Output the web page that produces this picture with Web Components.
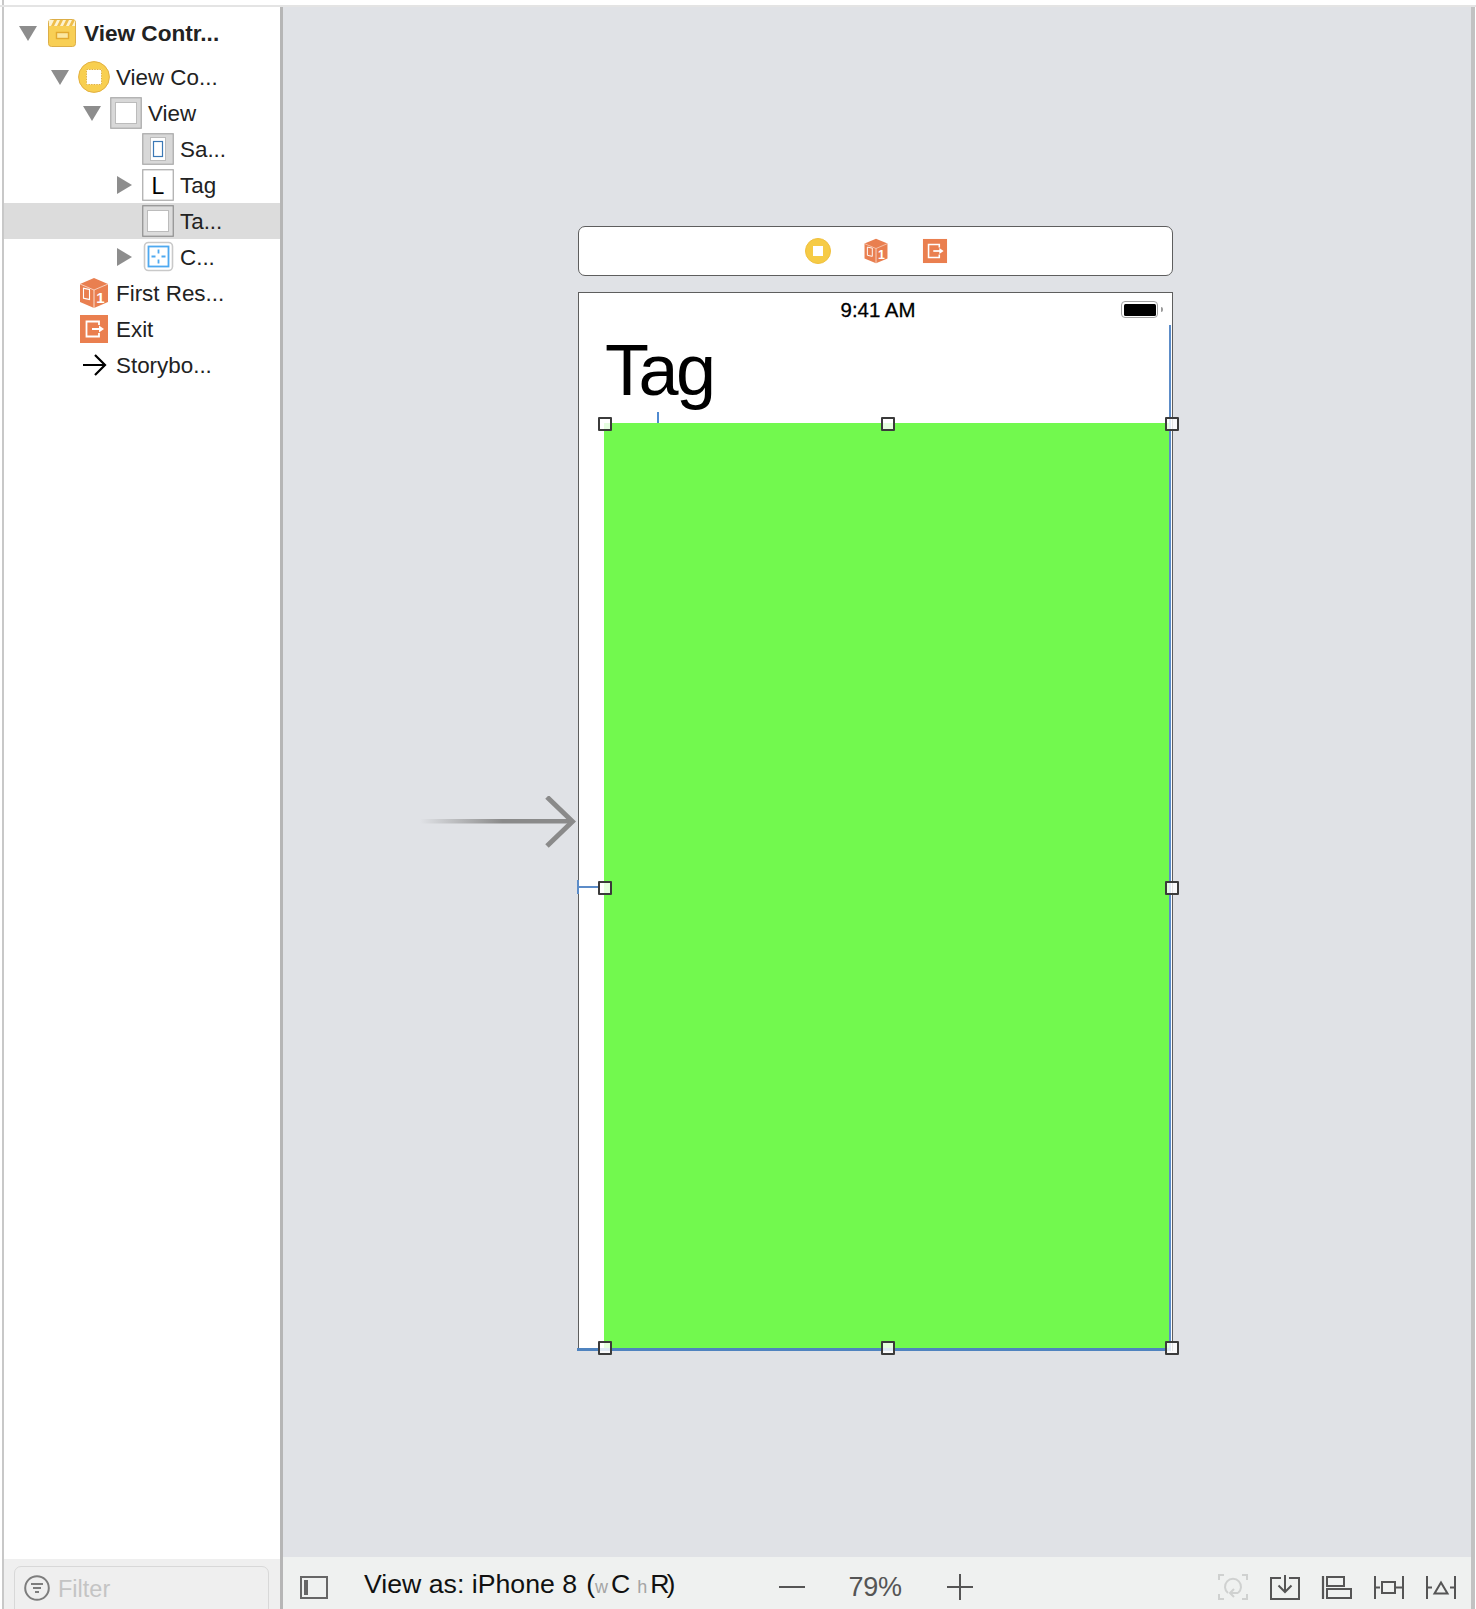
<!DOCTYPE html>
<html>
<head>
<meta charset="utf-8">
<title>Storyboard</title>
<style>
  html, body { margin: 0; padding: 0; background: #fff; }
  body { font-family: "Liberation Sans", Arial, sans-serif; }
</style>
</head>
<body>
<xc-app>
  <xc-outline slot="outline">
    <xc-row level="0" arrow="down" bold><xc-icon name="scene"></xc-icon>View Contr...</xc-row>
    <xc-row level="1" arrow="down"><xc-icon name="controller"></xc-icon>View Co...</xc-row>
    <xc-row level="2" arrow="down"><xc-icon name="view"></xc-icon>View</xc-row>
    <xc-row level="3"><xc-icon name="safe"></xc-icon>Sa...</xc-row>
    <xc-row level="3" arrow="right"><xc-icon name="label"></xc-icon>Tag</xc-row>
    <xc-row level="3" selected><xc-icon name="selected"></xc-icon>Ta...</xc-row>
    <xc-row level="3" arrow="right"><xc-icon name="constraints"></xc-icon>C...</xc-row>
    <xc-row level="1"><xc-icon name="cube"></xc-icon>First Res...</xc-row>
    <xc-row level="1"><xc-icon name="exit"></xc-icon>Exit</xc-row>
    <xc-row level="1"><xc-icon name="arrow"></xc-icon>Storybo...</xc-row>
  </xc-outline>
  <xc-filter slot="filter">Filter</xc-filter>
  <xc-canvas slot="canvas"></xc-canvas>
  <xc-bar slot="bar"></xc-bar>
</xc-app>

<script>
// tous les pictos de l'interface, dessines en svg
const ICONS = {
  scene: `<svg width="28" height="28" viewBox="0 0 28 28">
      <rect x=".5" y=".5" width="27" height="27" rx="3" fill="#f8cf55" stroke="#dcae48"/>
      <path d="M1 1h26v6H1z" fill="#fdf3d0"/>
      <path d="M3 7l3-6h3L6 7zM9 7l3-6h3l-3 6zM15 7l3-6h3l-3 6zM21 7l3-6h3l-3 6z" fill="#eebd4a"/>
      <rect x="8.5" y="13.5" width="12" height="6" fill="#fbe7a2" stroke="#e2a92f" stroke-width="1.4"/></svg>`,
  controller: `<svg width="32" height="32" viewBox="0 0 32 32">
      <circle cx="16" cy="16" r="15.4" fill="#f8cf50" stroke="#e3b141"/>
      <rect x="8.5" y="8.5" width="15" height="15" fill="#fff" stroke="#e0b040" stroke-dasharray="1.4 1.2"/></svg>`,
  view: `<svg width="32" height="32" viewBox="0 0 32 32">
      <rect x=".75" y=".75" width="30.5" height="30.5" fill="#d8d8d8" stroke="#a9a9a9" stroke-width="1.2"/>
      <rect x="5.5" y="5.5" width="21" height="21" fill="#fff" stroke="#bcbcbc"/></svg>`,
  safe: `<svg width="32" height="32" viewBox="0 0 32 32">
      <rect x=".75" y=".75" width="30.5" height="30.5" fill="#d8d8d8" stroke="#a9a9a9" stroke-width="1.2"/>
      <rect x="8.5" y="4.5" width="15" height="23" fill="#fff" stroke="#bcbcbc"/>
      <rect x="11.5" y="8.5" width="9" height="15" fill="#fff" stroke="#3b78b5" stroke-width="1.2"/></svg>`,
  label: `<svg width="32" height="32" viewBox="0 0 32 32">
      <rect x=".75" y=".75" width="30.5" height="30.5" fill="#fff" stroke="#a9a9a9" stroke-width="1.2"/>
      <text x="16" y="24.5" text-anchor="middle" font-family="Liberation Sans" font-size="23" fill="#000">L</text></svg>`,
  selected: `<svg width="32" height="32" viewBox="0 0 32 32">
      <rect x=".75" y=".75" width="30.5" height="30.5" fill="#dcdcdc" stroke="#8f8f8f" stroke-width="1.2"/>
      <rect x="5.5" y="5.5" width="21" height="21" fill="#fff" stroke="#bcbcbc"/></svg>`,
  constraints: `<svg width="32" height="32" viewBox="0 0 32 32">
      <rect x="2.5" y="1.5" width="28" height="28" rx="4" fill="#fff" stroke="#c9c9c9" stroke-width="1.6"/>
      <rect x="6.5" y="5.5" width="20" height="20" fill="#fff" stroke="#4ea9f0" stroke-width="1.8"/>
      <path d="M16.5 8.5v4M16.5 18.5v4M9.5 15.5h4M19.5 15.5h4" stroke="#4ea9f0" stroke-width="1.8"/></svg>`,
  cube: `<svg width="28" height="30" viewBox="0 0 28 30">
      <path d="M14 0l14 6v18l-14 6-14-6V6z" fill="#e97f50"/>
      <path d="M0 6l14 6 14-6" fill="none" stroke="#fbe0d2" stroke-width=".8"/>
      <path d="M14 12v18" stroke="#fbe0d2" stroke-width="1"/>
      <rect x="3.5" y="10.5" width="6" height="10" fill="none" stroke="#fff" stroke-width="1.1" transform="skewY(12) translate(0 -1)"/>
      <text x="20.5" y="25" text-anchor="middle" font-family="Liberation Sans" font-weight="bold" font-size="15" fill="#fff">1</text></svg>`,
  exit: `<svg width="28" height="28" viewBox="0 0 28 28">
      <rect width="28" height="28" fill="#ea7f4f"/>
      <path d="M19 10V6.5H6.5v15H19V18" fill="none" stroke="#fff" stroke-width="1.8"/>
      <path d="M12 14h8" stroke="#fff" stroke-width="2"/>
      <path d="M19 10.5l5 3.5-5 3.5z" fill="#fff"/></svg>`,
  arrow: `<svg width="32" height="28" viewBox="0 0 32 28">
      <path d="M5 14h22M17 4l10 10-10 10" fill="none" stroke="#000" stroke-width="2.2"/></svg>`,
  dockController: `<svg width="26" height="26" viewBox="0 0 26 26">
      <circle cx="13" cy="13" r="12.5" fill="#f6cb45" stroke="#f0c03c"/>
      <rect x="8" y="8" width="10" height="10" fill="#fff"/></svg>`,
  panel: `<svg width="28" height="23" viewBox="0 0 28 23">
      <rect x="1" y="1" width="26" height="21" fill="none" stroke="#666" stroke-width="2"/>
      <rect x="4" y="4" width="4" height="15" fill="#666"/></svg>`,
  rotate: `<svg width="30" height="26" viewBox="0 0 30 26">
      <path d="M1 6V1h5M24 1h5v5M29 20v5h-5M6 25H1v-5" fill="none" stroke="#cfd1d0" stroke-width="2"/>
      <path d="M10 19a8 8 0 1 1 10 0M20 19h-7M16 15l-4 4 4 4" fill="none" stroke="#cfd1d0" stroke-width="2"/></svg>`,
  embed: `<svg width="30" height="25" viewBox="0 0 30 25">
      <path d="M11 3H1v21h28V3H19" fill="none" stroke="#555" stroke-width="2"/>
      <path d="M15 0v16M8.5 10.5l6.5 6.5 6.5-6.5" fill="none" stroke="#555" stroke-width="2"/></svg>`,
  align: `<svg width="30" height="23" viewBox="0 0 30 23">
      <path d="M1 0v23" stroke="#555" stroke-width="2.2"/>
      <rect x="5" y="1" width="17" height="9" fill="none" stroke="#555" stroke-width="2"/>
      <rect x="5" y="13" width="24" height="9" fill="none" stroke="#555" stroke-width="2"/></svg>`,
  pin: `<svg width="30" height="23" viewBox="0 0 30 23">
      <path d="M1 0v23M29 0v23M1 11.5h5M22 11.5h7" stroke="#555" stroke-width="2"/>
      <rect x="8" y="6" width="13" height="11" fill="none" stroke="#555" stroke-width="2"/></svg>`,
  stack: `<svg width="30" height="23" viewBox="0 0 30 23">
      <path d="M1 0v23M29 0v23M1 11.5h5M24 11.5h5" stroke="#555" stroke-width="2"/>
      <path d="M15 6.5l6.5 11h-13z" fill="none" stroke="#555" stroke-width="2"/></svg>`
};

// un picto par son nom
class XcIcon extends HTMLElement {
  constructor() {
    super();
    this.shadowroot = this.attachShadow({ mode: 'open' });
  }
  connectedCallback() {
    let name = this.getAttribute('name');
    this.shadowroot.innerHTML = `
      <style>
        :host { display: inline-flex; align-items: center; justify-content: center; }
        svg { display: block; overflow: visible; }
      </style>
      ${ICONS[name]}`;
  }
}
customElements.define('xc-icon', XcIcon);

// une ligne de l'arbre : niveau, triangle, icone puis texte
class XcRow extends HTMLElement {
  constructor() {
    super();
    this.shadowroot = this.attachShadow({ mode: 'open' });
  }
  connectedCallback() {
    let level = Number(this.getAttribute('level')) || 0;
    let arrow = this.getAttribute('arrow');
    this.shadowroot.innerHTML = `
      <style>
        :host {
          display: flex; align-items: center; height: 36px; box-sizing: border-box;
          padding-left: ${15 + level * 32}px;
          font: 22.4px "Liberation Sans", Arial, sans-serif; color: #222;
        }
        :host([bold]) { font-weight: bold; font-size: 22.6px; margin-bottom: 8px; }
        :host([selected]) { background: #dcdcdc; }
        .arrow { width: 27px; flex: none; display: flex; }
        .down { border-top: 15px solid #8d8d8d; border-left: 9px solid transparent; border-right: 9px solid transparent; }
        .right { margin-left: 2px; border-left: 15px solid #8d8d8d; border-top: 9px solid transparent; border-bottom: 9px solid transparent; }
        .icon { width: 32px; flex: none; display: flex; justify-content: center; margin-right: 6px; }
        .text { margin-top: 1px; white-space: nowrap; }
      </style>
      <span class="arrow"><span class="${arrow || ''}"></span></span>
      <span class="icon"><slot name="icon"></slot></span>
      <span class="text"><slot></slot></span>`;
    let icon = this.querySelector('xc-icon');
    if (icon) icon.slot = 'icon';
  }
}
customElements.define('xc-row', XcRow);

class XcOutline extends HTMLElement {
  constructor() {
    super();
    this.shadowroot = this.attachShadow({ mode: 'open' });
  }
  connectedCallback() {
    this.shadowroot.innerHTML = `
      <style>
        :host { display: block; padding-top: 8px; }
      </style>
      <slot></slot>`;
  }
}
customElements.define('xc-outline', XcOutline);

// champ filtre en bas de la colonne
class XcFilter extends HTMLElement {
  constructor() {
    super();
    this.shadowroot = this.attachShadow({ mode: 'open' });
  }
  connectedCallback() {
    this.shadowroot.innerHTML = `
      <style>
        :host { display: block; height: 50px; box-sizing: border-box; background: #efefef; padding: 7px 11px 0 10px; overflow: hidden; }
        .field {
          height: 60px; box-sizing: border-box; border: 1.5px solid #d8d8d8; border-radius: 7px;
          display: flex; align-items: flex-start; padding: 8px 0 0 9px; gap: 8px;
          font: 23.5px "Liberation Sans", Arial, sans-serif; color: #c4c4c4;
        }
        svg { display: block; flex: none; }
        span { line-height: 26px; margin-top: 1px; }
      </style>
      <div class="field">
        <svg width="26" height="26" viewBox="0 0 26 26">
          <circle cx="13" cy="13" r="11.8" fill="none" stroke="#7d7d7d" stroke-width="2"/>
          <path d="M7 9h12M9 13h8M11 17h4" stroke="#7d7d7d" stroke-width="1.8"/>
        </svg>
        <span><slot></slot></span>
      </div>`;
  }
}
customElements.define('xc-filter', XcFilter);

// poignee de selection, posee sur la vue verte
class XcHandle extends HTMLElement {
  constructor() {
    super();
    this.shadowroot = this.attachShadow({ mode: 'open' });
  }
  connectedCallback() {
    this.shadowroot.innerHTML = `
      <style>
        :host {
          position: absolute; width: 14px; height: 14px; box-sizing: border-box; margin: -7px 0 0 -7px;
          border: 2.4px solid #3b3b3b; background: rgba(255,255,255,.82); border-radius: 1px;
          left: ${this.getAttribute('x')}; top: ${this.getAttribute('y')};
        }
      </style>`;
  }
}
customElements.define('xc-handle', XcHandle);

// la barre au dessus de la scene
class XcDock extends HTMLElement {
  constructor() {
    super();
    this.shadowroot = this.attachShadow({ mode: 'open' });
  }
  connectedCallback() {
    this.shadowroot.innerHTML = `
      <style>
        :host {
          position: absolute; left: 295px; top: 219px; width: 595px; height: 50px; box-sizing: border-box;
          border: 1.5px solid #5e5e5e; border-radius: 7px; background: #fff;
          display: flex; align-items: center; justify-content: center;
        }
        div { width: 144px; display: flex; align-items: center; justify-content: space-between; margin-left: 3px; }
      </style>
      <div>
        <xc-icon name="dockController"></xc-icon>
        <xc-icon name="cube" style="transform: scale(.82)"></xc-icon>
        <xc-icon name="exit" style="transform: scale(.86)"></xc-icon>
      </div>`;
  }
}
customElements.define('xc-dock', XcDock);

// ecran de l'iphone avec la barre de statut, le titre et la vue verte
class XcPhone extends HTMLElement {
  constructor() {
    super();
    this.shadowroot = this.attachShadow({ mode: 'open' });
  }
  connectedCallback() {
    this.shadowroot.innerHTML = `
      <style>
        :host {
          position: absolute; left: 295px; top: 285px; width: 595px; height: 1059px; box-sizing: border-box;
          border: 1.5px solid #5e5e5e; border-bottom: 0; background: #fff;
          display: flex; flex-direction: column;
          font-family: "Liberation Sans", Arial, sans-serif; color: #000;
        }
        .status { height: 36px; flex: none; display: flex; align-items: center; justify-content: center; position: relative; }
        .time { font-size: 20.4px; -webkit-text-stroke: .3px #000; position: relative; left: 2.5px; top: -1px; }
        .battery {
          position: absolute; left: 542px; top: 8px; width: 37px; height: 17px; box-sizing: border-box;
          border: 1.5px solid #a3a3a3; border-radius: 4px; padding: 1.5px; display: flex;
        }
        .battery i { flex: 1; background: #000; border-radius: 1.5px; }
        .nub { position: absolute; left: 582px; top: 14px; width: 2px; height: 5px; background: #9a9a9a; border-radius: 0 2px 2px 0; }
        .title { height: 94px; flex: none; box-sizing: border-box; padding: 4px 0 0 26px; }
        h1 { margin: 0; font-weight: normal; font-size: 72px; letter-spacing: -2.5px; line-height: 74px; }
        .green {
          flex: 1; position: relative; margin: 0 1px 0 25px;
          background: #72f94e; border-bottom: 3px solid #4f83bf;
        }
        .bottom { position: absolute; left: -27px; right: 0; bottom: -3px; height: 3px; background: #4f83bf; }
        .rightline { position: absolute; right: 0; top: -98px; bottom: 0; width: 2.5px; background: #5c8cc8; }
        .tick { position: absolute; left: 53px; top: -11px; width: 2px; height: 11px; background: #4f8ad0; }
        .leftline { position: absolute; left: -27px; width: 21px; top: 463px; height: 2px; background: #5c8cc8; }
        .leftcap { position: absolute; left: -27px; width: 2px; top: 457px; height: 14px; background: #5c8cc8; }
      </style>
      <div class="status">
        <span class="time">9:41 AM</span>
        <span class="battery"><i></i></span>
        <span class="nub"></span>
      </div>
      <div class="title"><h1>Tag</h1></div>
      <div class="green">
        <div class="bottom"></div>
        <div class="rightline"></div>
        <div class="tick"></div>
        <div class="leftline"></div>
        <div class="leftcap"></div>
        <xc-handle x="1px" y="1px"></xc-handle>
        <xc-handle x="284px" y="1px"></xc-handle>
        <xc-handle x="calc(100% + .5px)" y="1px"></xc-handle>
        <xc-handle x="1px" y="465px"></xc-handle>
        <xc-handle x="calc(100% + .5px)" y="465px"></xc-handle>
        <xc-handle x="1px" y="925px"></xc-handle>
        <xc-handle x="284px" y="925px"></xc-handle>
        <xc-handle x="calc(100% + .5px)" y="925px"></xc-handle>
      </div>`;
  }
}
customElements.define('xc-phone', XcPhone);

// fond de la scene, on y pose librement la fleche d'entree, le dock et l'ecran
class XcCanvas extends HTMLElement {
  constructor() {
    super();
    this.shadowroot = this.attachShadow({ mode: 'open' });
  }
  connectedCallback() {
    this.shadowroot.innerHTML = `
      <style>
        :host { display: block; position: relative; background: #e0e2e6; flex: 1; min-height: 0; }
        svg { position: absolute; left: 137px; top: 789px; }
      </style>
      <svg width="156" height="52" viewBox="0 0 156 52">
        <defs>
          <linearGradient id="fade" x1="0" x2="1" y1="0" y2="0">
            <stop offset="0" stop-color="#8a8a8a" stop-opacity="0"/>
            <stop offset=".55" stop-color="#8a8a8a"/>
          </linearGradient>
        </defs>
        <rect x="0" y="23" width="150" height="4.5" fill="url(#fade)"/>
        <path d="M127 1l25.5 24.5L127 50" fill="none" stroke="#8a8a8a" stroke-width="5"/>
      </svg>
      <xc-dock></xc-dock>
      <xc-phone></xc-phone>`;
  }
}
customElements.define('xc-canvas', XcCanvas);

// barre d'outils du bas
class XcBar extends HTMLElement {
  constructor() {
    super();
    this.shadowroot = this.attachShadow({ mode: 'open' });
  }
  connectedCallback() {
    this.shadowroot.innerHTML = `
      <style>
        :host {
          display: flex; align-items: center; height: 52px; flex: none; box-sizing: border-box;
          background: #eff1f0; padding: 8px 15px 0 17px;
          font: 26.7px "Liberation Sans", Arial, sans-serif; color: #111;
        }
        .as { margin-left: 36px; white-space: nowrap; position: relative; top: -3px; display: flex; align-items: baseline; }
        .as small { font-size: 18px; color: #a4a4a4; }
        .paren { margin-left: 9px; }
        .last { margin-left: 3px; letter-spacing: -3px; }
        .zoom { display: flex; align-items: center; margin-left: 106px; color: #555; }
        .minus { width: 26px; height: 2px; background: #555; }
        .plus { position: relative; width: 26px; height: 26px; margin-left: 45px; }
        .plus::before { content: ""; position: absolute; left: 0; right: 0; top: 12px; height: 2px; background: #555; }
        .plus::after { content: ""; position: absolute; top: 0; bottom: 0; left: 12px; width: 2px; background: #555; }
        .pct { margin-left: 44px; font-size: 27px; letter-spacing: -.3px; }
        .tools { margin-left: auto; display: flex; align-items: center; gap: 22px; }
      </style>
      <xc-icon name="panel"></xc-icon>
      <span class="as">View as: iPhone 8<span class="paren">(</span><small>w</small><span style="margin-left:3px">C</span><small style="margin-left:7px">h</small><span class="last">R)</span></span>
      <div class="zoom">
        <span class="minus"></span>
        <span class="pct">79%</span>
        <span class="plus"></span>
      </div>
      <div class="tools">
        <xc-icon name="rotate"></xc-icon>
        <xc-icon name="embed"></xc-icon>
        <xc-icon name="align"></xc-icon>
        <xc-icon name="pin"></xc-icon>
        <xc-icon name="stack"></xc-icon>
      </div>`;
  }
}
customElements.define('xc-bar', XcBar);

// la fenetre : trait du haut, colonne de gauche et scene
class XcApp extends HTMLElement {
  constructor() {
    super();
    this.shadowroot = this.attachShadow({ mode: 'open' });
  }
  connectedCallback() {
    this.shadowroot.innerHTML = `
      <style>
        :host {
          display: block; width: 1476px; height: 1609px; overflow: hidden; box-sizing: border-box; padding-top: 5px;
          background: linear-gradient(#c8c8c8, #c8c8c8) 2px 0 / 2px 100% no-repeat #fff;
        }
        .top { height: 2px; background: #e4e4e4; }
        .main { display: flex; height: 1602px; margin: 0 1px 0 4px; border-right: 4px solid #c2c2c2; }
        .side { width: 276px; flex: none; display: flex; flex-direction: column; background: #fff; border-right: 3px solid #b6b6b6; }
        .grow { flex: 1; }
        .stage { flex: 1; min-width: 0; display: flex; flex-direction: column; }
      </style>
      <div class="top"></div>
      <div class="main">
        <div class="side">
          <slot name="outline"></slot>
          <div class="grow"></div>
          <slot name="filter"></slot>
        </div>
        <div class="stage">
          <slot name="canvas"></slot>
          <slot name="bar"></slot>
        </div>
      </div>`;
  }
}
customElements.define('xc-app', XcApp);
</script>
</body>
</html>
